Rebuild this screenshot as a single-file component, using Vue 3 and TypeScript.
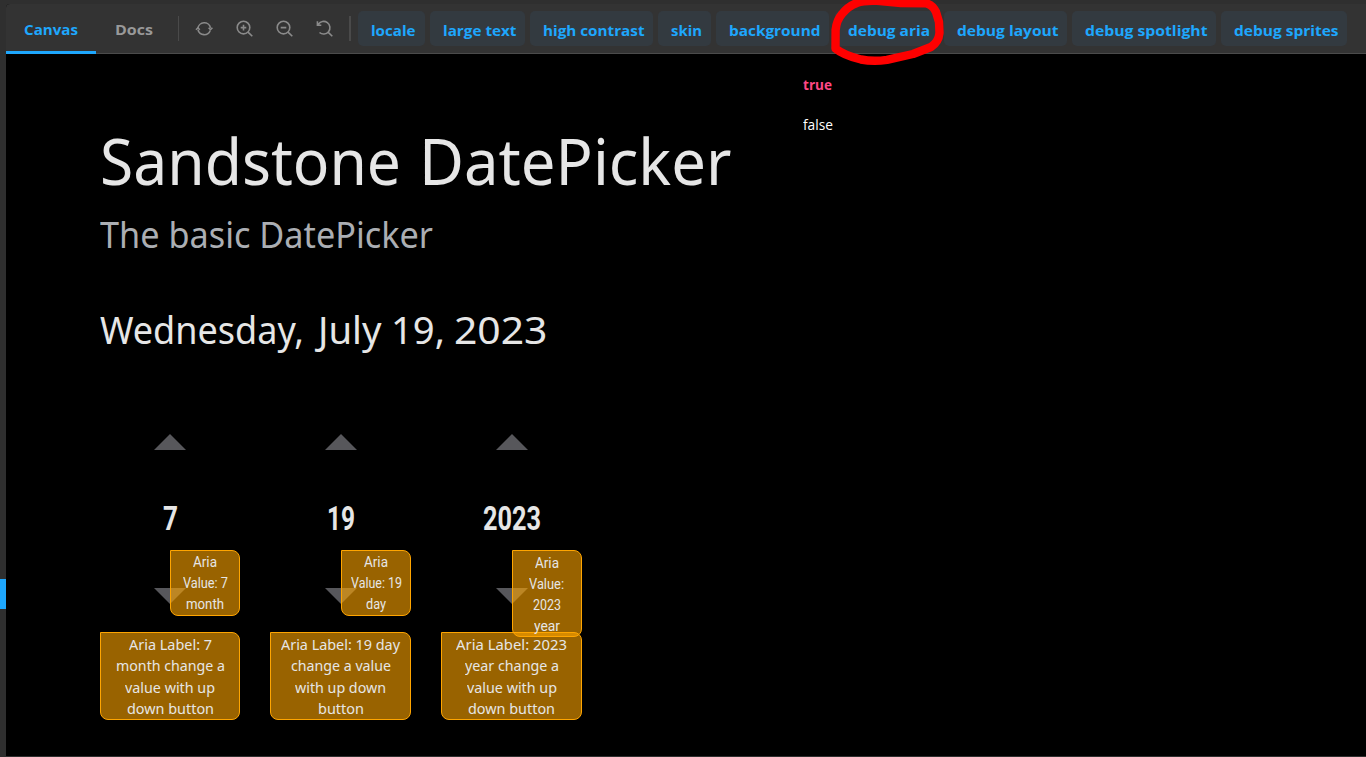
<script setup lang="ts">
import type { Directive } from 'vue'

interface Line { text: string; width: number }
interface Word extends Line { gap: number }
interface Tool { label: string; width: number; text: number; gap: number }
interface Column { value: Line; valueLines: Line[]; labelLines: Line[] }

// Condenses or widens a run of text so it occupies the given number of pixels.
const vFit: Directive<HTMLElement, number> = {
  mounted(el, binding) {
    const natural = el.getBoundingClientRect().width
    if (!natural) return
    const extra = parseFloat(el.dataset.gap ?? '0')
    el.style.transform = `scaleX(${binding.value / natural})`
    el.style.marginRight = `${binding.value - natural + extra}px`
  },
}

const title: Word[] = [
  { text: 'Sandstone', width: 301, gap: 18 },
  { text: 'DatePicker', width: 312.5, gap: 0 },
]

const dateWords: Word[] = [
  { text: 'Wednesday,', width: 204, gap: 13.5 },
  { text: 'July', width: 63.5, gap: 10 },
  { text: '19,', width: 54, gap: 8.5 },
  { text: '2023', width: 93.5, gap: 0 },
]

const tools: Tool[] = [
  { label: 'locale', width: 67, text: 44.5, gap: 5 },
  { label: 'large text', width: 95, text: 73.5, gap: 5 },
  { label: 'high contrast', width: 123, text: 101.5, gap: 5 },
  { label: 'skin', width: 53, text: 31, gap: 5 },
  { label: 'background', width: 113, text: 91.5, gap: 6 },
  { label: 'debug aria', width: 104, text: 82, gap: 5 },
  { label: 'debug layout', width: 123, text: 101.5, gap: 5 },
  { label: 'debug spotlight', width: 144, text: 122.5, gap: 5 },
  { label: 'debug sprites', width: 126, text: 104.5, gap: 0 },
]

const columns: Column[] = [
  {
    value: { text: '7', width: 15 },
    valueLines: [{ text: 'Aria', width: 24 }, { text: 'Value: 7', width: 45 }, { text: 'month', width: 38 }],
    labelLines: [
      { text: 'Aria Label: 7', width: 83 }, { text: 'month change a', width: 109 },
      { text: 'value with up', width: 90 }, { text: 'down button', width: 87 },
    ],
  },
  {
    value: { text: '19', width: 28 },
    valueLines: [{ text: 'Aria', width: 24 }, { text: 'Value: 19', width: 51 }, { text: 'day', width: 20 }],
    labelLines: [
      { text: 'Aria Label: 19 day', width: 119 }, { text: 'change a value', width: 100 },
      { text: 'with up down', width: 91 }, { text: 'button', width: 46 },
    ],
  },
  {
    value: { text: '2023', width: 58 },
    valueLines: [
      { text: 'Aria', width: 24 }, { text: 'Value:', width: 35 },
      { text: '2023', width: 28 }, { text: 'year', width: 26 },
    ],
    labelLines: [
      { text: 'Aria Label: 2023', width: 111 }, { text: 'year change a', width: 94 },
      { text: 'value with up', width: 90 }, { text: 'down button', width: 87 },
    ],
  },
]
</script>

<template>
  <div class="app">
    <div class="sidebar"><div class="selected"></div></div>
    <div class="panel">
      <header class="toolbar">
        <div class="tab active"><span v-fit="54" class="fit">Canvas</span></div>
        <div class="tab docs"><span v-fit="38" class="fit">Docs</span></div>
        <i class="divider"></i>
        <div class="icons">
          <svg viewBox="0 0 18 18">
            <path d="M2.9 8.4A6.4 6.4 0 0 1 15.5 7.8M15.2 10.4A6.4 6.4 0 0 1 3 10" />
            <path d="M1 9.8 2.9 7.9l1.9 1.9M13.6 7.8l1.9 1.9 1.9-1.9" />
          </svg>
          <svg viewBox="0 0 18 18"><circle cx="8.5" cy="7.6" r="6.3" /><path d="m13 12.1 4.3 4.2M8.5 4.8v5.6M5.7 7.6h5.6" /></svg>
          <svg viewBox="0 0 18 18"><circle cx="8.5" cy="7.6" r="6.3" /><path d="m13 12.1 4.3 4.2M5.7 7.6h5.6" /></svg>
          <svg viewBox="0 0 18 18"><path d="M3.4 4.2A6.3 6.3 0 1 1 4.5 12.5M13 12.1l4.3 4.2M2.4 1.3v3.9h3.9" /></svg>
        </div>
        <i class="divider second"></i>
        <nav class="tools">
          <button
            v-for="t in tools" :key="t.label" class="tool"
            :style="{ width: t.width + 'px', marginRight: t.gap + 'px' }"
          ><span v-fit="t.text" class="fit">{{ t.label }}</span></button>
        </nav>
      </header>

      <main class="canvas">
        <h1 class="words"><span v-for="w in title" :key="w.text" v-fit="w.width" :data-gap="w.gap" class="fit">{{ w.text }}</span></h1>
        <h2><span v-fit="333" class="fit">The basic DatePicker</span></h2>
        <p class="date words"><span v-for="w in dateWords" :key="w.text" v-fit="w.width" :data-gap="w.gap" class="fit">{{ w.text }}</span></p>
        <div class="pickers">
          <section v-for="c in columns" :key="c.value.text" class="picker">
            <svg class="arrow up" viewBox="0 0 32 16"><path d="M0 16 16 0l16 16z" /></svg>
            <div class="value"><span v-fit="c.value.width" class="fit">{{ c.value.text }}</span></div>
            <svg class="arrow down" viewBox="0 0 32 16"><path d="M0 0h32L16 16z" /></svg>
            <div class="aria-label">
              <div v-for="l in c.labelLines" :key="l.text" class="line"><span v-fit="l.width" class="fit">{{ l.text }}</span></div>
            </div>
            <div class="aria-value" :class="{ tall: c.valueLines.length > 3 }">
              <div v-for="l in c.valueLines" :key="l.text" class="line"><span v-fit="l.width" class="fit">{{ l.text }}</span></div>
            </div>
          </section>
        </div>
      </main>
    </div>

    <div class="menu">
      <div class="option chosen"><span v-fit="29" class="fit">true</span></div>
      <div class="option"><span v-fit="30" class="fit">false</span></div>
    </div>

    <svg class="marker" viewBox="0 0 120 70">
      <path d="M5.5 48.5 5.6 30C6.4 22 8.4 18 12 14 16 9 21 5 27 3 34 0 42 .8 50 1L71 3 96 3.4C101 4.2 104 8 106 12L109 22 109.5 33C109 38 107 43 101 47L83 54 57 59.8C49 61 39 61 31 59.5 21 57 12 54 5.5 48.5Z" />
    </svg>
  </div>
</template>

<style>
body { background: #2f2f2f; overflow: hidden; }
</style>

<style scoped>
* { box-sizing: border-box; }
.app { position: relative; display: flex; width: 1366px; height: 757px; background: #2f2f2f; overflow: hidden; }
.sidebar { width: 6px; flex: none; padding-top: 579px; }
.selected { height: 30px; background: #1ea7fd; }
.panel { flex: 1; min-width: 0; margin: 4px 0 1px; display: flex; flex-direction: column; border-radius: 4px 0 0 0; overflow: hidden; background: #000; }
.fit { display: inline-block; white-space: nowrap; transform-origin: left center; }
.words { display: flex; }
.words .fit { flex: none; }
.toolbar { display: flex; height: 50px; flex: none; background: #333; border-bottom: 1px solid #4b4b4b; font: 700 15px/20px "Open Sans", sans-serif; }
.tab { height: 50px; padding: 15px 0 0 18px; color: #999; }
.tab.active { width: 90px; color: #1ea7fd; border-bottom: 3px solid #1ea7fd; }
.tab.docs { width: 82px; padding-left: 19px; }
.divider { width: 1px; height: 25px; margin-top: 12px; background: #4a4a4a; flex: none; }
.divider.second { width: 2px; margin-left: 16px; }
.icons { display: flex; gap: 22px; margin: 16px 0 0 16px; }
.icons svg { width: 18px; height: 18px; fill: none; stroke: #8a8a8a; stroke-width: 1.6; }
.tools { display: flex; margin: 7px 0 0 7px; }
.tool { flex: none; height: 35px; padding: 3px 0 0 13px; border: 0; border-radius: 5px; background: #333a40; color: #1ea7fd; font: inherit; text-align: left; }
.canvas { flex: 1; padding: 0 0 0 94px; background: #000; color: #e6e6e6; font-family: "Noto Sans", sans-serif; }
h1, h2, p { margin: 0; font-weight: 400; }
h1 { height: 88px; margin-top: 63px; font-size: 64px; line-height: 88px; }
h2 { height: 50px; margin-top: 5px; font-size: 36px; line-height: 50px; color: #abaeb3; }
.date { height: 54px; margin-top: 42px; font-size: 39px; line-height: 54px; }
.pickers { display: flex; gap: 30.1px; margin: 78px 0 0 -.3px; }
.picker { position: relative; display: flex; flex: none; flex-direction: column; align-items: center; width: 140.7px; }
.arrow { display: block; width: 32px; height: 16px; fill: #57575b; }
.value { height: 46px; margin: 45px 0 47px; font: 700 34px/46px Roboto, sans-serif; }
.aria-label { width: 100%; height: 87.5px; padding-top: 1px; margin-top: 28px; border: 1px solid #ffa500; border-radius: 0 8px 8px 8px; background: rgba(255, 165, 0, .6); font-size: 15px; line-height: 21.4px; text-align: center; }
.aria-value { position: absolute; left: 50%; right: 0; top: 116px; height: 66px; padding-top: 1px; border: 1px solid #ffa500; border-radius: 0 8px 8px 8px; background: rgba(255, 165, 0, .6); font: 15px/21px Roboto, sans-serif; text-align: center; }
.aria-value.tall { height: 87px; padding-top: 2px; }
.line { white-space: nowrap; }
.menu { position: absolute; left: 803px; top: 75px; font: 14px/20px "Open Sans", sans-serif; color: #fff; }
.option { height: 40px; }
.chosen { color: #ff4785; font-weight: 700; }
.marker { position: absolute; left: 830px; top: 0; width: 120px; height: 70px; fill: none; stroke: #f00; stroke-width: 8.4; stroke-linejoin: round; pointer-events: none; }
</style>
